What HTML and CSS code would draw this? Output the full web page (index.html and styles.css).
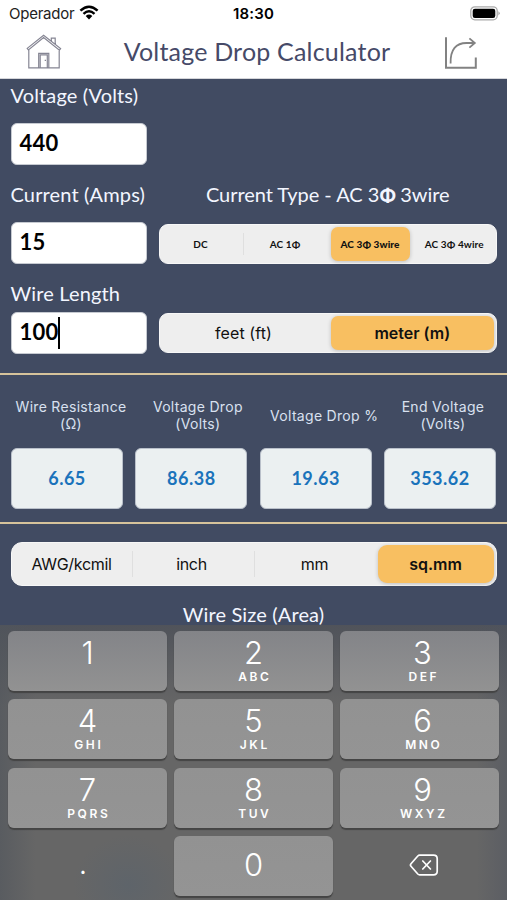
FILE: index.html
```html
<!DOCTYPE html>
<html lang="en">
<head>
<meta charset="utf-8">
<title>Voltage Drop Calculator</title>
<link rel="stylesheet" href="styles.css">
</head>
<body>
<div class="app">
  <div class="status">
    <div class="carrier"><span>Operador</span>
      <svg width="20" height="15" viewBox="0 0 20 15" fill="none" stroke="#000" stroke-width="2.5"><path d="M1.4 5.6Q10-2.2 18.6 5.6M4.5 8.8Q10 3.8 15.5 8.8"/><path d="M6.7 10.9Q10 8 13.3 10.9L10 14.4Z" fill="#000" stroke="none"/></svg>
    </div>
    <div class="clock">18:30</div>
    <svg class="battery" width="31" height="15" viewBox="0 0 31 15"><rect x=".8" y=".8" width="26.4" height="13" rx="4" fill="#fff" stroke="#aaa" stroke-width="1.3"/><rect x="2.7" y="2.7" width="22.6" height="9.2" rx="2.2"/><path d="M28.4 5.2Q31.2 7.3 28.4 9.4Z" fill="#aaa"/></svg>
  </div>
  <header class="nav">
    <svg class="home" width="36" height="36" viewBox="0 0 36 36" fill="none" stroke="#858593" stroke-width="1.2"><path d="M2.8 16V33.8H33.2V16M1.2 14.4L17.6 1.3L34.6 14.6L33.4 16.1L17.6 3.6L2.4 16ZM25.3 7V4.2H29.2V10.2M12.7 33.6V19.4H22.8V33.6M14.2 33.6V20.9H21.3V33.6"/><path d="M18.7 26.3H20"/></svg>
    <h1>Voltage Drop Calculator</h1>
    <svg class="share" width="34" height="34" viewBox="0 0 34 34" fill="none" stroke="#828282" stroke-width="2"><path d="M2 1.2V31.8H31.8V21.6"/><path d="M6.6 27.5C6.2 13.5 12 6.8 23 7H30.5" stroke-width="1.8"/><path d="M25.4 2.4L30.8 7L25.4 11.6" stroke-width="1.8"/></svg>
  </header>
  <main>
    <section class="inputs">
      <div class="label volts">Voltage (Volts)</div>
      <div class="field">440</div>
      <div class="pair labels"><div class="label amps">Current (Amps)</div><div class="label type">Current Type - AC 3<b>Φ</b> 3wire</div></div>
      <div class="pair">
        <div class="field">15</div>
        <div class="seg current"><span>DC</span><span>AC 1Φ</span><span class="on">AC 3Φ 3wire</span><span>AC 3Φ 4wire</span></div>
      </div>
      <div class="label length">Wire Length</div>
      <div class="pair">
        <div class="field">100<i class="caret"></i></div>
        <div class="seg unit"><span>feet (ft)</span><span class="on">meter (m)</span></div>
      </div>
    </section>
    <section class="results">
      <div class="result"><p>Wire Resistance<br>(Ω)</p><output>6.65</output></div>
      <div class="result"><p>Voltage Drop<br>(Volts)</p><output>86.38</output></div>
      <div class="result"><p>Voltage Drop %</p><output>19.63</output></div>
      <div class="result"><p>End Voltage<br>(Volts)</p><output>353.62</output></div>
    </section>
    <section class="wire">
      <div class="seg size"><span>AWG/kcmil</span><span>inch</span><span>mm</span><span class="on">sq.mm</span></div>
      <div class="label area">Wire Size (Area)</div>
    </section>
  </main>
  <div class="keypad">
    <div class="key">1</div>
    <div class="key">2<small>ABC</small></div>
    <div class="key">3<small>DEF</small></div>
    <div class="key">4<small>GHI</small></div>
    <div class="key">5<small>JKL</small></div>
    <div class="key">6<small>MNO</small></div>
    <div class="key">7<small>PQRS</small></div>
    <div class="key">8<small>TUV</small></div>
    <div class="key">9<small>WXYZ</small></div>
    <div class="key plain dot">.</div>
    <div class="key zero">0</div>
    <div class="key plain erase"><svg width="30" height="22" viewBox="0 0 30 22" fill="none" stroke="#fff" stroke-width="1.7" stroke-linejoin="round" stroke-linecap="round"><path d="M10.6 1.2H24.5Q28.2 1.2 28.2 4.8V17.2Q28.2 20.8 24.5 20.8H10.6Q9.6 20.8 8.8 20L2 12.3Q.9 11 2 9.7L8.8 2Q9.6 1.2 10.6 1.2ZM13.8 7L21.4 15M21.4 7L13.8 15"/></svg></div>
  </div>
</div>
</body>
</html>
```

FILE: styles.css
```css
* { box-sizing: border-box; }
body { margin: 0; background: #414b62; }
.app { width: 507px; height: 900px; overflow: hidden; display: flex; flex-direction: column; font-family: Lato, "Liberation Sans", sans-serif; }

.status { height: 28px; flex: none; background: #fff; display: grid; grid-template-columns: 1fr auto 1fr; align-items: center; padding: 0 6px 0 9px; font: 15px Inter, sans-serif; color: #000; }
.carrier { display: flex; align-items: center; gap: 5px; letter-spacing: -.25px; color: #222; }
.carrier span { margin-top: -1px; }
.carrier svg { margin-top: -3px; }
.clock { font-weight: 600; letter-spacing: .2px; margin: -1px 3px 0 0; }
.battery { justify-self: end; margin-top: -2px; }

.nav { height: 51px; flex: none; background: #fff; display: grid; grid-template-columns: 98px 1fr 91px; align-items: center; border-bottom: 1px solid #d5d6da; }
.nav h1 { margin: 0; padding-bottom: 4px; text-align: center; font-size: 25px; font-weight: 400; letter-spacing: .2px; color: #464a68; white-space: nowrap; }
.home { margin: -3px 0 0 26px; }
.share { margin: -1px 0 0 28px; }

main { height: 546px; flex: none; display: flex; flex-direction: column; color: #f3f6ff; }
.label { font-size: 20px; line-height: 24px; letter-spacing: .15px; white-space: nowrap; }
.inputs { height: 294px; flex: none; padding: 4px 10px 0 10.5px; }
.volts { margin-bottom: 16px; }
.field { width: 136px; height: 42px; flex: none; background: #fff; border: 1px solid #c6cad1; border-radius: 6px; padding: 0 8px 3px; display: flex; align-items: center; color: #000; font-size: 22px; font-weight: 700; letter-spacing: .2px; }
.caret { width: 2px; height: 32px; margin: 3px 0 0 0; background: #000; }
.pair { display: flex; align-items: center; gap: 12px; }
.labels { margin: 17px 0 16px; }
.amps { width: 136px; flex: none; }
.type { flex: 1; text-align: center; letter-spacing: -.05px; }
.type b { font: 700 19px/1 Inter, sans-serif; letter-spacing: -1px; }
.length { margin: 17px 0 7px; }

.seg { flex: 1; display: grid; height: 40px; background: #eee; border: 1px solid #f7f7f7; border-radius: 9px; padding: 2px; color: #111; font-family: Inter, sans-serif; }
.seg span { display: flex; align-items: center; justify-content: center; white-space: nowrap; padding-bottom: 1px; }
.seg .on { background: #f8bf61; border-radius: 7px; box-shadow: 0 1px 4px #0003; font-weight: 600; }
.current { grid-template-columns: 81px 88px 79px 1fr; margin-top: 2px; font-family: Lato, sans-serif; font-size: 10px; font-weight: 700; letter-spacing: .1px; }
.current span:not(.on) { padding-right: 3px; }
.current span:last-child { padding: 0 0 1px 5px; }
.current .on { font-weight: 900; }
.current span:first-child { box-shadow: 1px 0 #d0d0d0; clip-path: inset(6px -1px 6px 0); }
.unit { grid-template-columns: 169px 1fr; font-size: 16px; }
.unit span:first-child { padding-right: 5px; letter-spacing: .1px; }

.results { height: 151px; flex: none; display: grid; grid-template-columns: repeat(4, 112px); justify-content: space-between; padding: 0 11px; border: solid #d6c39b; border-width: 2px 0; }
.result { display: flex; flex-direction: column; padding-top: 20px; }
.result p { height: 40px; margin: 0 -12px; display: flex; align-items: center; justify-content: center; text-align: center; font: 14px/17px Inter, sans-serif; letter-spacing: .3px; color: #d9e1f0; }
.result:nth-child(1) p { padding-left: 8px; }
.result:nth-child(2) p { padding-left: 13px; }
.result:nth-child(3) p { padding-left: 17px; }
.result:nth-child(4) p { padding-left: 6px; }
.result output { height: 61px; margin-top: 13px; background: #ebf0f1; border: 1px solid #b9c0ca; border-radius: 6px; display: flex; align-items: center; justify-content: center; color: #1a73bb; font-size: 18px; font-weight: 700; letter-spacing: .5px; padding-bottom: 2px; }

.wire { flex: none; padding: 18px 10.5px 0; }
.size { height: 44px; grid-template-columns: 118px 122px 124px 1fr; font-size: 16px; border-radius: 11px; }
.size .on { border-radius: 9px; }
.size span:not(.on) { letter-spacing: -.3px; padding-right: 2px; }
.size span:nth-child(-n+2) { box-shadow: 1px 0 #d0d0d0; clip-path: inset(6px -1px 6px 0); }
.area { margin-top: 16px; text-align: center; }

.keypad { height: 275px; flex: none; padding: 6px 8px 4px; display: grid; grid-template-columns: repeat(3, 159px); grid-template-rows: repeat(4, 60px); justify-content: space-between; align-content: space-between; background: radial-gradient(ellipse 55px 50px at 128px 260px, #5e646a, #5e646a00), linear-gradient(90deg, #50555c99, #66666600 7%, #66666600 94%, #4c526066), linear-gradient(#50535a, #666 30%, #666); }
.key { display: flex; flex-direction: column; align-items: center; padding-top: 3px; border-radius: 6px; background: linear-gradient(#929292, #949494); box-shadow: 0 1.5px 1px #444; color: #fff; font: 300 31px/38px Inter, sans-serif; }
.key:nth-child(-n+3) { background: linear-gradient(#838488, #929292); }
.key:nth-child(3n):not(.plain) { padding-left: 6px; }
.key small { font-size: 12px; line-height: 14px; margin-top: -2px; font-weight: 600; letter-spacing: 2.6px; padding-left: 2.6px; }
.key.plain { background: none; box-shadow: none; justify-content: center; padding: 0; }
.key.dot { padding: 0 9px 0 0; font-weight: 400; font-size: 24px; }
.key.zero { padding-top: 10px; }
.key.erase { padding-left: 8px; padding-bottom: 2px; }
```
